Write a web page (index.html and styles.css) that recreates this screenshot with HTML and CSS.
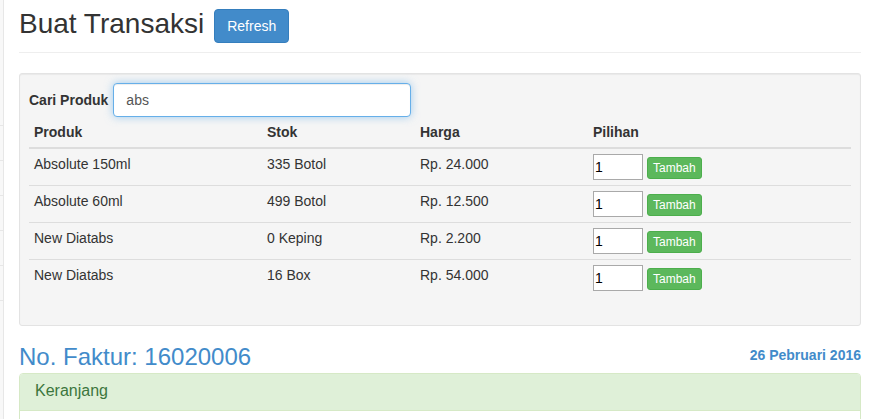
FILE: index.html
```html
<!DOCTYPE html>
<html>
<head>
<meta charset="utf-8">
<link rel="stylesheet" href="styles.css">
</head>
<body>
<div class="layout">
  <nav class="sidebar">
    <ul class="side-menu">
      <li class="side-top"></li>
      <li></li>
      <li></li>
      <li></li>
      <li></li>
      <li></li>
    </ul>
  </nav>
  <main class="content">
    <div class="page-header">
      <h1 class="title">Buat Transaksi</h1>
      <button class="btn btn-primary">Refresh</button>
    </div>

    <div class="well">
      <div class="search-row">
        <label class="search-label">Cari Produk</label>
        <input class="search-input" type="text" value="abs">
      </div>
      <table class="table">
        <colgroup>
          <col class="c1"><col class="c2"><col class="c3"><col>
        </colgroup>
        <thead>
          <tr><th>Produk</th><th>Stok</th><th>Harga</th><th>Pilihan</th></tr>
        </thead>
        <tbody>
          <tr>
            <td>Absolute 150ml</td><td>335 Botol</td><td>Rp. 24.000</td>
            <td><div class="pick"><input class="qty" type="text" value="1"><button class="btn-xs">Tambah</button></div></td>
          </tr>
          <tr>
            <td>Absolute 60ml</td><td>499 Botol</td><td>Rp. 12.500</td>
            <td><div class="pick"><input class="qty" type="text" value="1"><button class="btn-xs">Tambah</button></div></td>
          </tr>
          <tr>
            <td>New Diatabs</td><td>0 Keping</td><td>Rp. 2.200</td>
            <td><div class="pick"><input class="qty" type="text" value="1"><button class="btn-xs">Tambah</button></div></td>
          </tr>
          <tr>
            <td>New Diatabs</td><td>16 Box</td><td>Rp. 54.000</td>
            <td><div class="pick"><input class="qty" type="text" value="1"><button class="btn-xs">Tambah</button></div></td>
          </tr>
        </tbody>
      </table>
    </div>

    <div class="faktur-row">
      <h3 class="faktur">No. Faktur: 16020006</h3>
      <span class="date">26 Pebruari 2016</span>
    </div>

    <div class="panel">
      <div class="panel-heading">Keranjang</div>
      <div class="panel-body"></div>
    </div>
  </main>
</div>
</body>
</html>
```
FILE: styles.css
```css
* { box-sizing: border-box; }
html, body {
  margin: 0;
  padding: 0;
  background: #fff;
  font-family: "Liberation Sans", Arial, Helvetica, sans-serif;
  font-size: 14px;
  line-height: 20px;
  color: #333;
  overflow: hidden;
}
.layout {
  display: flex;
  min-height: 419px;
}
.sidebar {
  width: 4px;
  flex: none;
  background: #f8f8f8;
  border-right: 1px solid #e7e7e7;
}
.side-menu {
  list-style: none;
  margin: 0;
  padding: 0;
}
.side-menu li {
  height: 35px;
  border-bottom: 1px solid #e7e7e7;
}
.side-menu li.side-top {
  height: 126px;
}
.content {
  flex: 1;
  padding: 0 12px 0 15px;
  min-width: 0;
}
.page-header {
  display: flex;
  align-items: flex-start;
  gap: 10px;
  padding: 8px 0 9px;
  border-bottom: 1px solid #eee;
}
.title {
  margin: 0;
  font-size: 28px;
  line-height: 31px;
  font-weight: 500;
  color: #333;
}
.btn {
  font-family: inherit;
  font-size: 14px;
  line-height: 20px;
  padding: 6px 12px;
  border-radius: 4px;
  border: 1px solid transparent;
  cursor: pointer;
}
.btn-primary {
  margin-top: 1px;
  background: #428bca;
  border-color: #357ebd;
  color: #fff;
}
.well {
  margin-top: 20px;
  background: #f5f5f5;
  border: 1px solid #e3e3e3;
  border-radius: 3px;
  padding: 9px;
  box-shadow: inset 0 1px 1px rgba(0,0,0,.05);
}
.search-row {
  display: flex;
  align-items: center;
  gap: 5px;
}
.search-label {
  font-weight: bold;
}
.search-input {
  width: 298px;
  height: 34px;
  padding: 6px 12px;
  font-family: inherit;
  font-size: 14px;
  color: #555;
  background: #fff;
  border: 1px solid #66afe9;
  border-radius: 4px;
  outline: 0;
  box-shadow: inset 0 1px 1px rgba(0,0,0,.075), 0 0 8px rgba(102,175,233,.6);
}
.table {
  width: 100%;
  border-collapse: collapse;
  margin-bottom: 20px;
}
.c1 { width: 233px; }
.c2 { width: 153px; }
.c3 { width: 173px; }
.table th {
  text-align: left;
  font-weight: bold;
  padding: 5px;
  border-bottom: 2px solid #ddd;
  vertical-align: bottom;
}
.table td {
  padding: 5px;
  border-top: 1px solid #ddd;
  vertical-align: top;
}
.table tbody tr:first-child td {
  border-top: 0;
}
.pick {
  display: flex;
  align-items: center;
  gap: 4px;
}
.qty {
  width: 50px;
  height: 26px;
  padding: 0 1px;
  font-family: "Liberation Sans", Arial, sans-serif;
  font-size: 14px;
  color: #000;
  background: #fff;
  border: 1px solid #a9a9a9;
  border-radius: 0;
  outline: 0;
}
.btn-xs {
  font-family: inherit;
  font-size: 12px;
  line-height: 18px;
  padding: 1px 5px;
  border-radius: 3px;
  background: #5cb85c;
  border: 1px solid #4cae4c;
  color: #fff;
  margin-top: 2px;
}
.faktur-row {
  display: flex;
  justify-content: space-between;
  align-items: flex-start;
  margin-top: 18px;
  margin-bottom: 3px;
}
.faktur {
  margin: 0;
  font-size: 24px;
  line-height: 26px;
  font-weight: 500;
  color: #428bca;
}
.date {
  margin-top: 1px;
  font-weight: bold;
  color: #428bca;
}
.panel {
  border: 1px solid #d6e9c6;
  border-radius: 4px;
  background: #fff;
}
.panel-heading {
  background: #dff0d8;
  color: #3c763d;
  font-size: 16px;
  line-height: 17.6px;
  padding: 8px 15px 10px;
  border-bottom: 1px solid #d6e9c6;
  border-radius: 3px 3px 0 0;
}
.panel-body {
  height: 80px;
}
```
